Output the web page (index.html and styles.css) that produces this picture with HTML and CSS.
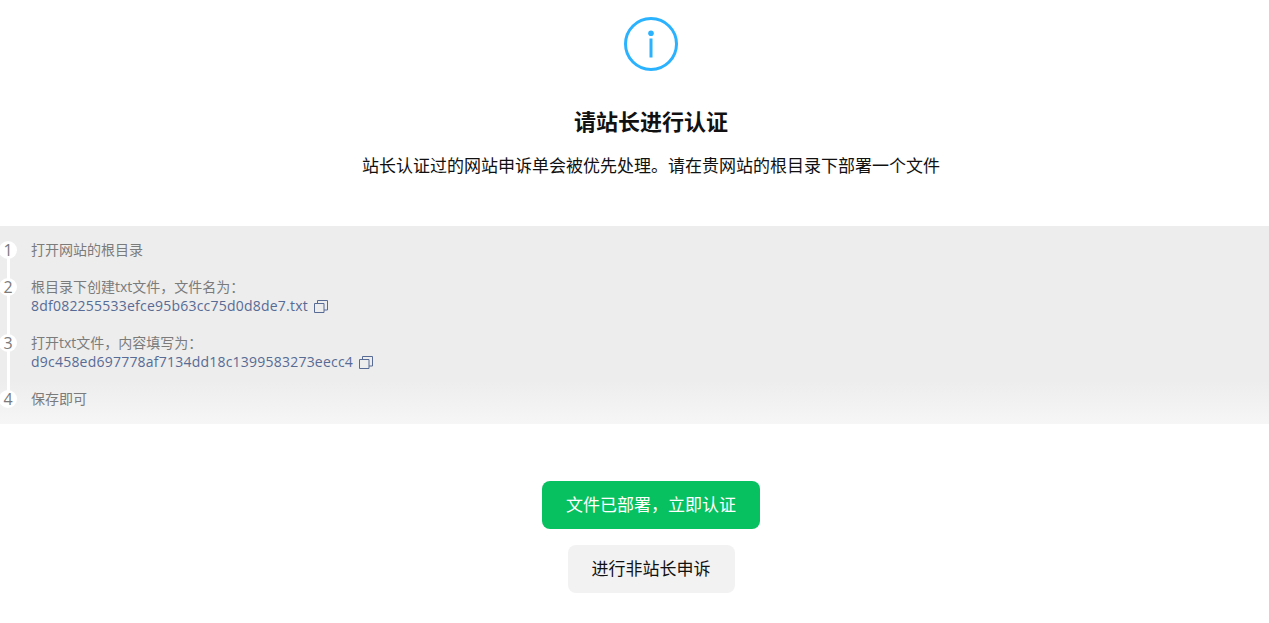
FILE: index.html
```html
<!DOCTYPE html>
<html lang="zh-CN">

<head>
    <meta charset="UTF-8">
    <title>站长认证</title>
    <link rel="stylesheet" href="styles.css">
</head>

<body>

    <div class="head">
        <svg class="info-icon" viewBox="0 0 54 54" width="54" height="54">
            <circle cx="27" cy="27" r="25.5" fill="none" stroke="#2bb2ff" stroke-width="3"></circle>
            <circle cx="27" cy="16.3" r="2.8" fill="#2bb2ff"></circle>
            <rect x="25.5" y="21.500" width="3" height="19" fill="#2bb2ff"></rect>
        </svg>
        <h1 class="title">请站长进行认证</h1>
        <p class="desc">站长认证过的网站申诉单会被优先处理。请在贵网站的根目录下部署一个文件</p>
    </div>

    <ul class="steps">
        <li class="step">
            <span class="num">1</span>
            <div>打开网站的根目录</div>
        </li>
        <li class="step">
            <span class="num">2</span>
            <div>根目录下创建txt文件，文件名为：</div>
            <div class="code">8df082255533efce95b63cc75d0d8de7.txt
                <svg class="copy" viewBox="0 0 14 13" width="14" height="13">
                    <path d="M0.5 3.500h9.500v9h-9.500z M3.500 3.500v-3h10v9.500h-3.500" fill="none" stroke="#576b95"></path>
                </svg>
            </div>
        </li>
        <li class="step">
            <span class="num">3</span>
            <div>打开txt文件，内容填写为：</div>
            <div class="code">d9c458ed697778af7134dd18c1399583273eecc4
                <svg class="copy" viewBox="0 0 14 13" width="14" height="13">
                    <path d="M0.5 3.500h9.500v9h-9.500z M3.500 3.500v-3h10v9.500h-3.500" fill="none" stroke="#576b95"></path>
                </svg>
            </div>
        </li>
        <li class="step">
            <span class="num">4</span>
            <div>保存即可</div>
        </li>
    </ul>

    <div class="actions">
        <button class="btn btn-primary">文件已部署，立即认证</button>
        <button class="btn btn-default">进行非站长申诉</button>
    </div>

</body>

</html>
```
FILE: styles.css
```css
body {
    font-family: "Open Sans", "Noto Sans CJK SC", sans-serif;
    background: #fff;
    color: #111;
    margin: 0;
}

.head {
    display: flex;
    flex-direction: column;
    align-items: center;
    padding: 17px 0 0 33px;
}

.info-icon {
    display: block;
}

.title {
    font-size: 22px;
    font-weight: bold;
    line-height: 30px;
    margin: 35px 0 0;
}

.desc {
    font-size: 17px;
    line-height: 24px;
    margin: 18px 0 0;
}

.steps {
    list-style: none;
    margin: 48px 0 0;
    padding: 14px 0 16px;
    font-size: 14px;
    line-height: 19px;
    color: #7b7b7b;
    background: linear-gradient(#ededed 0, #ededed 78%, #f6f6f6 100%);
}

.step {
    position: relative;
    padding-left: 31px;
    margin-bottom: 18px;
}

.step:last-child {
    margin-bottom: 0;
}

/* line to the next number */
.step::before {
    content: "";
    position: absolute;
    left: 7px;
    top: 9px;
    bottom: -28px;
    width: 3px;
    background: #fff;
}

.step:last-child::before {
    display: none;
}

.num {
    position: absolute;
    left: -1px;
    top: 1px;
    width: 18px;
    height: 18px;
    border-radius: 50%;
    background: #fff;
    text-align: center;
    font-size: 16px;
    line-height: 18px;
}

.code {
    color: #576b95;
    letter-spacing: 0.22px;
}

.copy {
    vertical-align: -2px;
    margin-left: 2.500px;
}

.actions {
    display: flex;
    flex-direction: column;
    align-items: center;
    gap: 16px;
    margin-top: 57px;
    padding-left: 33px;
}

.btn {
    height: 48px;
    border: none;
    border-radius: 8px;
    font-family: inherit;
    font-size: 17px;
    padding: 0 24px 3px;
}

.btn-primary {
    background: #07c160;
    color: #fff;
}

.btn-default {
    background: #f2f2f2;
    color: #111;
}
```
